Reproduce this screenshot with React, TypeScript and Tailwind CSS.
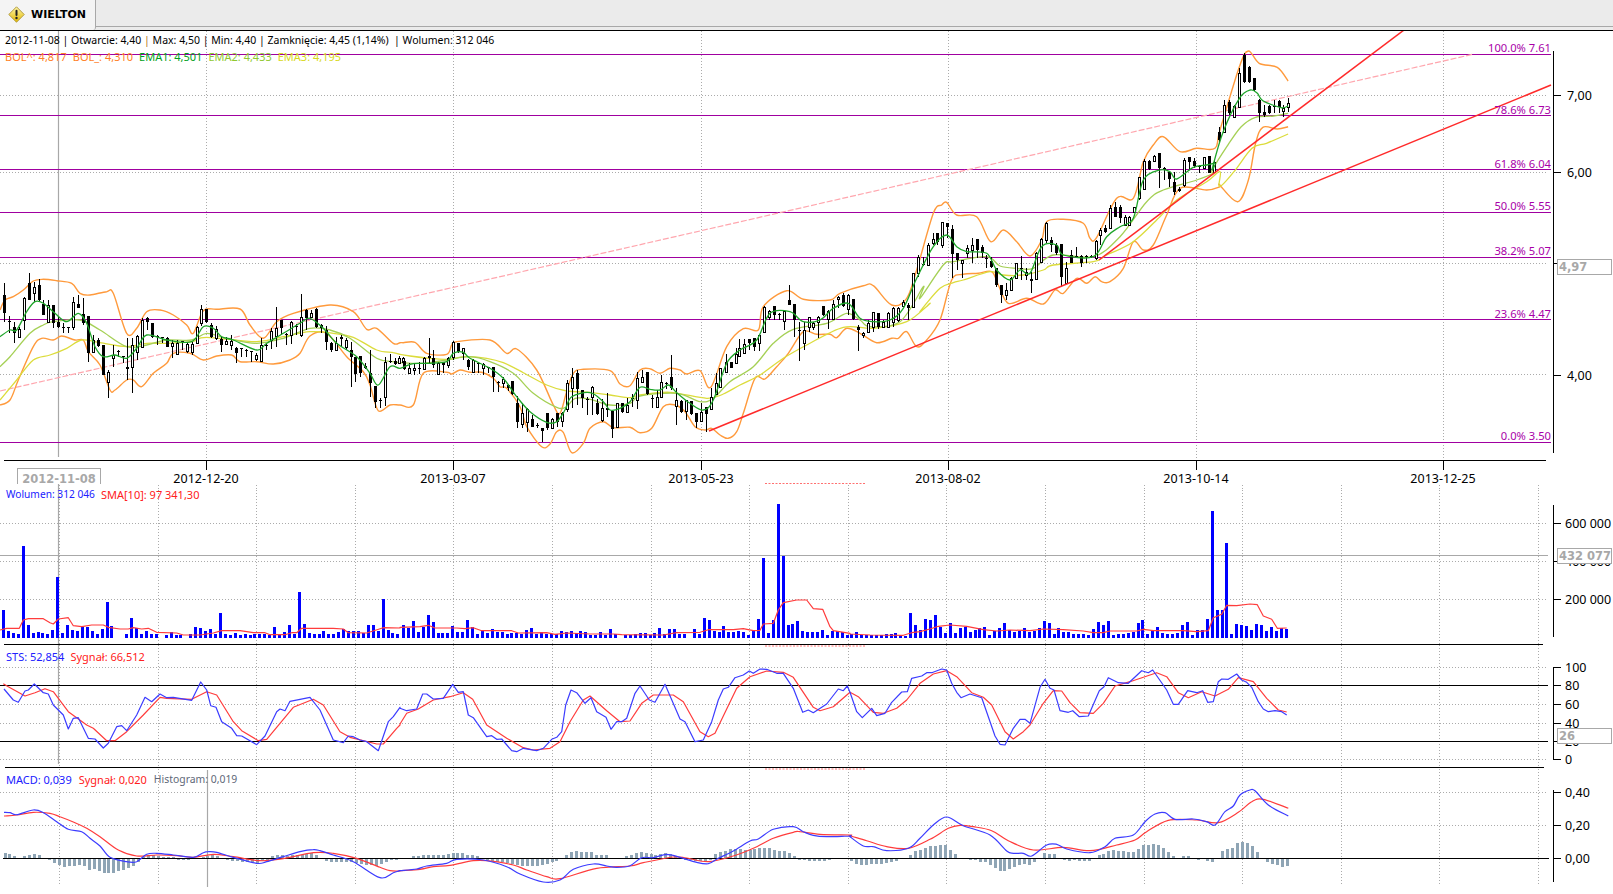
import React from "react";

type Pt = [number, number];
type Candle = [number, number, number, number, number, number];

// zoom-read points -> page coordinates
const z = (pts: number[][], x0: number, y0: number, sx = 3): Pt[] =>
  pts.map(([x, y]) => [x0 + x / sx, y0 + y / 3]);

const path = (pts: Pt[]) => pts.map(([x, y]) => `${x.toFixed(1)},${y.toFixed(1)}`).join(" ");

// smooth curve through the points (catmull-rom)
const smooth = (pts: Pt[]) => {
  let d = `M${pts[0][0].toFixed(1)} ${pts[0][1].toFixed(1)}`;
  for (let i = 0; i < pts.length - 1; i++) {
    const p0 = pts[Math.max(i - 1, 0)];
    const p1 = pts[i];
    const p2 = pts[i + 1];
    const p3 = pts[Math.min(i + 2, pts.length - 1)];
    const c1x = p1[0] + (p2[0] - p0[0]) / 6;
    const c1y = p1[1] + (p2[1] - p0[1]) / 6;
    const c2x = p2[0] - (p3[0] - p1[0]) / 6;
    const c2y = p2[1] - (p3[1] - p1[1]) / 6;
    d += `C${c1x.toFixed(1)} ${c1y.toFixed(1)} ${c2x.toFixed(1)} ${c2y.toFixed(1)} ${p2[0].toFixed(1)} ${p2[1].toFixed(1)}`;
  }
  return d;
};

const BOL_UP: Pt[] = [
  ...z([[0,180],[15,150],[40,140],[70,120],[100,93],[130,88],[170,92],[215,100],[240,130],[270,135],[320,125],[340,130],[380,250],[410,235],[440,185],[480,180],[520,195],[560,225],[580,250],[610,182],[650,178],[720,177],[750,225],[790,265],[830,215],[880,190],[990,165],[1060,185],[1100,238],[1130,235],[1180,280]], 0, 250),
  ...z([[30,68],[40,68],[75,67],[110,100],[170,103],[185,75],[200,65],[300,60],[350,100],[380,87],[440,150],[490,255],[510,280],[530,215],[550,160],[580,148],[660,152],[690,192],[720,197]], 390, 320),
  ...z([[0,300],[30,296],[60,310],[90,295],[120,300],[140,312],[180,302],[212,352],[260,230],[310,176],[355,180],[370,110],[440,62],[490,88],[570,90],[600,70],[670,47],[700,47],[755,105],[800,85],[830,0]], 640, 270),
  ...z([[0,253],[40,250],[65,225],[80,217],[110,255],[170,260],[212,335],[250,300],[290,335],[330,378],[365,330],[380,275],[430,268],[490,280],[510,325],[530,322],[590,205],[640,205],[670,95],[700,45],[730,20],[780,65],[830,55],[885,55],[900,0]], 920, 130).slice(1),
  ...z([[470,355],[525,110],[550,63],[580,100],[630,112],[660,153]], 1050, 30, 2.772).slice(1),
];

const BOL_LOW: Pt[] = [
  ...z([[0,465],[30,450],[55,390],[100,290],[125,265],[160,270],[185,258],[225,270],[250,270],[265,305],[300,345],[330,420],[345,420],[380,390],[400,390],[425,410],[460,370],[500,340],[520,310],[570,310],[610,330],[650,318],[695,315],[720,335],[770,335],[820,342],[870,330],[900,310],[930,258],[980,250],[1040,320],[1090,365],[1110,405],[1135,482],[1170,465]], 0, 250),
  ...z([[30,255],[70,255],[100,160],[170,157],[185,162],[210,150],[240,157],[275,157],[310,175],[330,200],[350,205],[390,260],[410,320],[455,380],[480,372],[500,335],[520,337],[545,398],[580,370],[600,325],[640,305],[670,323],[720,322]], 390, 320),
  ...z([[0,488],[35,475],[70,410],[105,405],[135,425],[165,470],[195,480],[215,475],[240,495],[265,505],[290,485],[310,430],[345,325],[375,327],[410,290],[445,250],[490,185],[530,193],[570,193],[590,203],[620,175],[660,190],[710,218],[755,205],[775,205],[800,185],[830,230],[860,210]], 640, 270),
  ...z([[60,570],[95,450],[130,433],[175,430],[215,425],[235,465],[265,520],[320,505],[370,522],[405,480],[430,490],[470,445],[500,460],[525,440],[545,455],[570,455],[610,415],[640,335],[670,360],[700,345],[740,255],[780,175],[860,180],[900,170]], 920, 130),
  ...z([[470,465],[520,515],[550,450],[570,340],[590,292],[630,297],[660,290]], 1050, 30, 2.772),
];

const EMA1: Pt[] = [
  ...z([[0,260],[30,240],[50,240],[80,185],[105,155],[130,160],[165,190],[200,215],[235,190],[260,220],[285,290],[310,320],[345,315],[380,325],[410,295],[440,255],[500,270],[575,275],[610,230],[640,235],[665,260],[700,270],[770,300],[800,280],[850,250],[900,220],[930,205],[970,235],[1010,280],[1070,320],[1110,370],[1135,405],[1170,350]], 0, 250),
  ...z([[30,145],[60,133],[90,130],[120,130],[170,125],[190,100],[220,97],[240,115],[300,145],[340,175],[380,230],[420,275],[470,307],[500,305],[525,270],[545,230],[600,218],[640,245],[660,270],[690,265],[720,245]], 390, 320),
  ...z([[0,352],[30,358],[60,360],[85,345],[110,368],[150,400],[190,420],[220,390],[260,280],[300,240],[350,210],[390,130],[450,125],[490,155],[540,150],[580,115],[625,100],[660,145],[700,155],[750,150],[790,115],[830,25]], 640, 270),
  ...z([[40,350],[80,315],[110,350],[140,365],[200,370],[230,420],[270,450],[300,420],[330,430],[365,350],[410,345],[430,375],[520,380],[560,320],[600,290],[640,265],[670,150],[720,120],[750,125],[770,147],[820,112],[860,105],[885,100]], 920, 130),
  ...z([[450,415],[480,305],[525,205],[555,180],[575,190],[590,212],[640,233],[660,228]], 1050, 30, 2.772),
];

const EMA2: Pt[] = [
  ...z([[0,350],[30,320],[90,250],[130,225],[160,215],[240,210],[300,240],[380,290],[440,285],[500,270],[575,270],[620,250],[680,265],[770,280],[850,265],[930,235],[990,240],[1050,265],[1130,325],[1180,335]], 0, 250),
  ...z([[30,128],[100,130],[170,120],[240,110],[300,125],[370,160],[430,220],[500,262],[530,260],[555,235],[600,238],[660,255],[720,250]], 390, 320),
  ...z([[0,378],[110,370],[180,395],[220,385],[270,335],[340,290],[400,220],[460,178],[560,160],[620,130],[660,150],[690,170],[780,155],[850,50]], 640, 270),
  ...z([[0,505],[70,405],[100,395],[200,380],[240,408],[290,415],[340,415],[400,375],[520,380],[600,320],[680,215],[730,180],[830,150],[880,130]], 920, 130),
  ...z([[450,420],[490,350],[530,290],[570,262],[620,258],[660,250]], 1050, 30, 2.772),
];

const EMA3: Pt[] = [
  ...z([[0,450],[25,420],[50,390],[100,330],[150,315],[200,295],[245,270],[300,278],[380,290],[440,280],[500,280],[575,275],[620,262],[770,275],[850,260],[930,245],[1000,250],[1060,262],[1130,300],[1180,308]], 0, 250),
  ...z([[30,103],[60,108],[120,115],[170,118],[230,110],[290,115],[340,128],[400,158],[470,195],[530,213],[600,217],[660,225],[720,233]], 390, 320),
  ...z([[0,375],[90,367],[200,385],[250,372],[300,345],[360,315],[430,265],[500,225],[610,172],[700,175],[800,155],[870,100]], 640, 270),
  ...z([[0,545],[60,475],[100,458],[130,450],[210,425],[250,435],[310,435],[370,420],[400,405],[520,395],[560,375],[640,335],[720,260],[770,210],[860,155],[900,125]], 920, 130),
  ...z([[470,470],[510,425],[560,355],[600,340],[660,312]], 1050, 30, 2.772),
];

// [zoomX, bodyTop, bodyBottom, wickTop, wickBottom, black]
const C1: Candle[] = [[13,135,190,100,215,1],[28,212,214,198,250,1],[43,230,250,215,280,1],[58,237,262,230,265,0],[73,143,210,140,240,0],[88,100,150,70,150,1],[103,112,130,95,155,0],[118,105,150,88,155,1],[130,162,195,150,195,1],[145,165,215,150,218,0],[160,165,218,165,235,1],[175,215,232,200,235,1],[190,231,233,220,248,1],[205,232,235,230,248,1],[220,155,232,140,240,0],[235,162,175,135,175,1],[250,192,220,145,225,1],[265,198,308,198,335,1],[280,270,305,255,305,0],[295,270,287,265,290,1],[310,285,375,285,375,1],[325,365,395,360,445,0],[340,315,325,285,350,0],[355,302,307,300,320,1],[370,318,320,318,340,1],[382,350,358,265,390,1],[397,285,350,265,428,0],[412,257,305,255,330,0],[427,210,290,205,295,0],[442,205,215,200,240,1],[457,220,260,220,265,1],[472,257,259,255,285,1],[487,261,263,260,280,1],[502,265,290,260,290,1],[517,280,287,270,325,0],[532,278,312,270,315,0],[547,274,276,272,300,1],[562,282,302,275,310,0],[577,282,305,275,315,0],[592,232,278,228,280,0],[604,178,218,165,228,0],[619,178,215,178,220,1],[634,225,262,218,265,1],[649,238,265,228,270,0],[664,268,285,258,305,1],[679,272,282,262,285,0],[694,272,285,255,300,0],[709,295,310,290,340,1],[724,295,297,295,322,1],[739,299,301,297,320,1],[754,303,305,302,335,1],[769,315,328,310,332,0],[784,285,332,265,335,0],[799,284,286,282,300,1],[814,242,270,235,298,0],[827,235,258,170,290,0],[842,210,235,210,255,1],[857,252,254,248,285,1],[872,215,255,212,282,0],[887,227,229,222,255,1],[902,202,255,132,262,0],[917,180,205,178,240,1],[932,188,200,180,205,0],[947,178,230,175,235,1],[962,225,235,222,250,1],[977,240,275,228,300,1],[992,278,300,275,305,1],[1007,278,300,262,302,0],[1022,260,268,255,290,1],[1037,270,290,265,300,0],[1052,300,320,275,412,1],[1065,320,372,320,395,1],[1080,318,370,318,380,1],[1095,347,355,340,358,1],[1110,370,398,300,440,1],[1125,408,455,408,475,1],[1140,451,453,445,475,1],[1155,335,442,322,468,0],[1170,334,336,312,340,1],[1185,333,342,325,345,1],[1197,325,338,318,342,0]];

const C2: Candle[] = [[38,115,125,110,130,0],[42,122,147,115,150,1],[57,143,160,130,162,0],[72,145,150,130,165,0],[87,143,148,125,162,1],[102,115,147,110,148,0],[116,107,115,55,130,1],[130,115,135,90,145,1],[145,130,162,125,165,0],[160,125,135,125,160,1],[175,115,135,110,145,0],[190,65,110,62,120,0],[205,70,95,70,100,1],[220,85,100,85,120,0],[235,120,142,118,150,1],[250,120,155,118,160,0],[265,129,131,125,158,1],[280,133,145,130,165,0],[295,141,143,140,160,1],[310,142,172,142,215,1],[325,185,187,183,215,1],[340,178,188,172,205,0],[355,195,205,193,212,1],[367,183,222,183,225,1],[382,250,305,228,325,1],[397,280,312,250,325,0],[412,268,305,265,335,0],[427,297,320,285,322,1],[442,314,316,308,325,1],[457,325,332,325,365,1],[472,280,325,280,330,1],[487,298,323,293,325,0],[502,280,305,278,322,1],[517,280,302,275,322,0],[532,188,268,180,275,0],[547,170,205,145,265,0],[562,160,208,150,255,1],[577,210,235,210,265,1],[590,237,239,230,285,1],[605,202,232,198,285,0],[620,250,282,238,285,1],[635,265,300,238,305,0],[650,265,270,218,290,1],[665,272,328,272,355,1],[680,250,322,248,325,0],[695,250,275,250,278,1],[710,255,275,235,278,0],[725,234,236,222,262,1],[740,175,240,155,268,0],[755,172,185,150,188,0],[770,155,222,155,225,1],[785,234,236,225,265,1],[800,232,260,210,265,0],[812,185,232,165,235,0],[827,189,191,185,208,1],[842,170,205,105,210,1],[857,240,258,205,315,0],[872,243,277,240,280,1],[887,240,272,240,300,0],[902,243,282,243,285,1],[917,280,305,278,325,1],[932,275,302,248,305,0],[947,262,282,260,335,1]];

const C3: Candle[] = [[212,382,418,355,420,0],[227,338,372,310,372,0],[241,295,352,295,355,0],[257,277,305,253,305,0],[272,277,295,277,295,1],[287,253,278,235,280,0],[298,235,258,207,260,0],[313,222,248,207,250,0],[328,208,218,208,240,1],[343,205,232,205,242,1],[358,195,220,195,243,0],[373,110,187,108,190,0],[388,123,140,120,150,0],[403,108,135,108,150,1],[418,131,133,128,150,1],[433,122,152,120,180,0],[448,90,104,45,104,1],[463,102,150,102,200,1],[478,181,183,155,272,1],[493,180,220,155,240,0],[508,142,172,140,185,0],[520,160,172,155,180,0],[535,140,155,138,205,0],[550,108,135,108,137,1],[565,122,148,120,178,0],[580,102,148,90,150,0],[595,80,88,78,115,0],[610,75,108,68,110,1],[625,75,118,72,135,0],[640,88,148,88,150,1],[655,170,180,165,242,1],[670,188,195,185,205,0],[685,158,185,150,190,0],[700,127,172,125,185,0],[715,130,170,130,178,1],[730,155,170,150,172,0],[745,130,172,125,175,0],[758,115,155,112,172,0],[773,115,150,112,155,0],[788,97,107,90,108,0],[803,105,115,100,150,1],[818,10,112,8,115,0],[833,-40,10,-45,20,0]];

const C4: Candle[] = [[8,402,404,380,408,1],[23,345,405,340,405,0],[38,328,340,310,345,0],[52,310,335,310,345,1],[67,275,345,275,355,0],[82,280,290,280,325,1],[97,297,372,285,445,1],[112,370,390,370,420,1],[127,390,398,390,445,0],[142,355,368,345,385,0],[155,345,360,325,400,0],[170,328,360,328,385,1],[185,352,370,345,385,1],[199,384,386,375,415,1],[214,393,412,380,415,1],[229,415,465,415,470,1],[244,465,495,465,518,1],[259,480,495,460,510,0],[274,445,480,440,482,0],[289,400,445,400,445,0],[304,414,416,378,450,1],[319,425,435,415,450,0],[334,447,452,425,488,1],[349,370,447,365,450,0],[364,327,395,325,400,0],[377,280,330,275,340,0],[392,330,345,320,365,1],[407,345,370,340,375,1],[422,343,440,343,470,1],[437,415,458,395,460,0],[452,375,400,360,400,1],[467,377,379,352,385,1],[482,378,398,375,412,1],[497,377,379,375,400,1],[512,377,379,375,385,1],[527,333,385,330,390,0],[541,300,315,295,345,0],[556,293,305,285,310,1],[571,233,293,225,298,0],[586,232,260,215,262,1],[601,230,265,225,280,1],[615,262,285,255,288,0],[628,262,285,258,288,0],[643,232,245,230,248,0],[658,142,205,140,210,0],[672,92,178,88,180,0],[687,92,118,90,120,1],[703,78,92,75,95,0],[718,68,115,68,175,1],[733,115,120,110,150,1],[748,125,148,125,170,1],[763,155,185,125,195,1],[778,178,182,172,186,1],[793,90,165,85,170,0],[808,82,95,80,120,1],[823,92,108,85,115,1],[838,109,111,105,130,1],[851,82,115,80,118,0],[866,78,128,78,130,1],[881,95,125,90,128,0]];

const C5: Candle[] = [[468,305,330,290,340,1],[482,225,305,210,310,0],[497,215,250,210,255,1],[511,228,260,225,262,0],[525,130,230,115,232,0],[538,75,155,70,158,1],[552,110,155,108,158,1],[566,145,180,143,182,1],[580,210,250,208,275,1],[594,245,255,225,260,1],[608,228,250,226,252,1],[622,229,231,210,250,1],[634,212,230,210,248,1],[647,235,242,225,260,0],[661,220,230,205,245,0]];

const toCandles = (c: Candle[], x0: number, y0: number, sx = 3) =>
  c.map(([x, bt, bb, wt, wb, k]) => ({
    x: Math.round(x0 + x / sx),
    bt: Math.round(y0 + bt / 3),
    bb: Math.round(y0 + bb / 3),
    wt: Math.round(y0 + wt / 3),
    wb: Math.round(y0 + wb / 3),
    black: k === 1,
  }));

const CANDLES = [
  ...toCandles(C1, 0, 250),
  ...toCandles(C2, 390, 320),
  ...toCandles(C3, 640, 270),
  ...toCandles(C4, 920, 130),
  ...toCandles(C5, 1050, 30, 2.772),
];

// heights in px above the baseline
const VOL1 = [28,7,5,4,92,13,5,6,5,4,8,61,5,13,8,7,11,11,7,4,9,36,12,0,0,4,20,10,4,7,4,4,0,3,6,3,3,0,4,11,10,7,9,4,25,4,3,5,3,4,3,4,4,4,3,11,3,6,13,4,46,14,5,4,4,7,4,4,6,9,7,7,7,5,13,13,7,39,8,5,4];
const VOL2 = [13,10,17,6,11,23,16,5,5,5,12,6,6,18,11,4,8,5,9,6,6,4,5,5,4,8,10,4,6,4,4,4,7,6,7,5,7,6,3,3,6,3,9,4,0,3,3,4,5,5,3,5,10,4,9,9,4,4,0,9,4,20,18,7,6,12,6,6,7,6,3,7,19,80,5,18,134,82,13,14,17,7,6,6,6,8,3,7,7,6,3];
const VOL3 = [4,6,3,3,3,3,3,4,4,5,3,2,25,13,8,19,18,23,11,5,15,5,10,11,6,8,10,11,3,7,10,15,8,6,7,10,6,7,10,17,15,4,10,6,6,4,4,4,3,9,16,13,17,3,4,4,5,6,15,18,4,7,11,5,4,4,5,13,16,3,8,8,19,127,28,28,95,4,14,13,12,8,14,13,7,11,7,10,9];

const SMA: Pt[] = [
  ...z([[0,300],[20,295],[58,295],[70,270],[85,266],[130,266],[150,278],[160,282],[175,267],[205,263],[220,287],[245,290],[275,285],[310,285],[325,292],[360,297],[385,297],[400,293],[425,297],[445,295],[470,307],[530,309],[550,315],[600,315],[640,309],[665,302],[720,302],[760,308],[795,308],[810,314],[855,314],[875,308],[890,308],[905,295],[1000,295],[1030,297],[1045,308],[1100,309],[1150,293],[1200,294]], 0, 530),
  ...z([[0,382],[60,380],[85,376],[105,384],[170,384],[195,386],[220,383],[245,392],[335,392],[355,399],[440,398],[465,403],[500,399],[570,402],[640,402],[665,404],[790,405],[830,398],[900,397],[925,389],[1000,389],[1030,386],[1060,392],[1080,391],[1090,372],[1120,370],[1135,330],[1150,308],[1190,300],[1220,300],[1240,326],[1268,328],[1290,380],[1300,392],[1350,400]], 400, 500),
  ...z([[0,402],[60,405],[160,406],[185,398],[210,395],[240,387],[265,379],[300,375],[350,379],[400,389],[440,393],[480,390],[540,392],[580,387],[640,389],[700,393],[730,398],[760,398],[780,393],[860,393],[880,388],[910,392],[1000,392],[1040,395],[1075,392],[1090,353],[1115,343],[1130,316],[1160,317],[1200,312],[1222,314],[1240,348],[1265,358],[1282,385],[1310,384]], 850, 500),
];

const STS_BLUE: Pt[] = [
  ...z([[12,207],[40,240],[55,247],[75,213],[85,210],[103,192],[130,218],[145,222],[160,255],[190,285],[205,327],[220,295],[235,293],[265,355],[285,357],[310,384],[325,370],[350,320],[365,317],[380,332],[410,285],[435,232],[455,245],[480,222],[500,233],[520,232],[575,241],[602,186],[620,210],[632,257],[648,262],[665,305],[695,325],[710,347],[725,348],[770,374],[795,348],[830,275],[840,267],[855,272],[870,244],[930,232],[960,270],[1000,360],[1030,368],[1045,348],[1060,350],[1080,360],[1100,365],[1135,392],[1165,305],[1180,290],[1200,262]], 0, 620),
  ...z([[0,625],[20,632],[50,627],[68,582],[80,582],[100,597],[130,595],[158,553],[175,577],[190,575],[205,645],[220,653],[260,710],[275,707],[290,718],[305,717],[335,752],[350,755],[370,745],[410,752],[430,745],[455,718],[470,712],[485,695],[497,615],[513,570],[530,578],[555,610],[573,593],[590,635],[618,652],[633,688],[650,665],[665,665],[680,655],[705,580],[720,558],[748,600],[765,607],[795,553],[840,657],[855,665],[885,725],[910,720],[935,665],[955,600],[970,567],[985,562],[1005,533],[1030,525],[1048,513],[1060,520],[1080,507],[1100,508],[1130,520],[1150,520],[1180,565],[1208,637],[1225,630],[1240,638],[1280,612],[1315,567],[1330,572],[1342,558],[1350,577]], 400, 500),
  ...z([[20,635],[37,653],[65,625],[80,647],[105,640],[125,607],[155,576],[172,575],[185,535],[215,528],[230,518],[245,518],[275,507],[290,510],[305,550],[320,577],[333,593],[360,582],[395,593],[435,708],[450,733],[465,735],[490,685],[510,658],[525,658],[540,670],[570,562],[585,538],[600,565],[612,570],[630,632],[655,637],[668,632],[688,650],[715,648],[748,572],[762,560],[775,533],[805,548],[835,550],[875,512],[895,518],[908,510],[950,570],[970,613],[985,613],[1013,572],[1040,578],[1058,572],[1073,607],[1090,605],[1105,545],[1115,537],[1135,538],[1160,522],[1175,540],[1190,547],[1205,562],[1225,605],[1240,627],[1255,635],[1275,632],[1295,635],[1310,645]], 850, 500),
];

const STS_RED: Pt[] = [
  ...z([[10,191],[25,200],[75,228],[105,218],[135,206],[160,215],[205,275],[260,315],[280,325],[320,362],[345,362],[380,335],[430,285],[480,232],[500,235],[575,238],[620,215],[650,225],[700,305],[725,332],[775,362],[800,358],[840,310],[880,262],[940,238],[970,255],[1020,335],[1050,352],[1130,372],[1150,372],[1190,325],[1200,315]], 0, 620),
  ...z([[0,672],[20,640],[55,627],[100,600],[150,590],[190,578],[218,598],[260,675],[320,715],[370,743],[400,750],[450,745],[480,725],[510,665],[550,600],[570,588],[620,632],[660,665],[690,663],[725,610],[760,585],[820,585],[850,605],[900,695],[925,710],[945,700],[1010,565],[1050,530],[1100,513],[1150,517],[1180,532],[1240,622],[1260,632],[1300,620],[1350,577]], 400, 500),
  ...z([[25,590],[70,637],[100,640],[140,625],[170,600],[210,550],[250,522],[290,512],[320,530],[365,578],[400,592],[425,615],[465,695],[490,717],[520,695],[540,675],[580,610],[610,572],[635,573],[660,608],[690,638],[730,640],[760,610],[795,558],[840,545],[920,518],[950,530],[985,578],[1015,593],[1055,575],[1095,588],[1135,568],[1165,533],[1210,545],[1250,595],[1285,630],[1310,636]], 850, 500),
];

const MACD_BLUE: Pt[] = [
  ...z([[12,577],[30,578],[50,584],[100,570],[130,578],[170,605],[205,628],[245,635],[270,655],[300,678],[330,712],[380,725],[410,725],[440,703],[470,700],[520,705],[580,712],[610,698],[625,695],[650,697],[700,712],[770,730],[800,725],[850,710],[900,695],[940,689],[960,692],[1000,705],[1060,725],[1140,773],[1180,758],[1200,752]], 0, 620),
  ...z([[0,1112],[50,1107],[80,1098],[140,1090],[170,1078],[250,1080],[320,1100],[360,1122],[430,1146],[480,1140],[520,1108],[580,1092],[620,1098],[650,1102],[690,1097],[725,1073],[760,1073],[800,1063],[840,1072],[890,1087],[925,1091],[955,1075],[1000,1053],[1050,1023],[1075,1017],[1120,988],[1180,980],[1210,995],[1240,1006],[1280,1010],[1350,1008]], 400, 500),
  ...z([[0,1010],[40,1038],[70,1040],[110,1052],[175,1045],[210,1015],[250,975],[290,951],[340,977],[420,1005],[470,1053],[490,1060],[520,1060],[545,1068],[590,1035],[620,1033],[650,1047],[720,1058],[765,1040],[795,1015],[850,1005],[885,965],[915,942],[945,938],[975,958],[1030,957],[1070,965],[1095,975],[1125,935],[1150,918],[1170,885],[1200,870],[1215,872],[1255,915],[1315,948]], 850, 500),
];

const MACD_RED: Pt[] = [
  ...z([[12,588],[50,585],[100,577],[150,580],[180,590],[220,606],[260,625],[300,650],[355,690],[410,708],[470,705],[530,707],[580,712],[640,703],[700,710],[780,722],[850,716],[940,698],[1000,700],[1070,715],[1140,742],[1170,752],[1200,753]], 0, 620),
  ...z([[0,1112],[60,1108],[100,1100],[150,1096],[220,1082],[260,1082],[340,1095],[380,1110],[440,1130],[480,1136],[590,1105],[690,1098],[730,1088],[820,1071],[860,1074],[925,1085],[1000,1068],[1060,1045],[1120,1015],[1180,997],[1200,995],[1260,1003],[1350,1005]], 400, 500),
  ...z([[0,1007],[50,1022],[110,1040],[175,1045],[240,1018],[295,985],[330,976],[370,980],[425,992],[475,1022],[550,1050],[640,1042],[720,1052],[800,1035],[855,1020],[890,995],[955,961],[1040,960],[1105,968],[1165,937],[1205,905],[1240,898],[1315,925]], 850, 500),
];

const HIST1 = [5,4,2,0,2,3,4,3,0,-1,-4,-6,-8,-7,-7,-6,-7,-11,-10,-12,-14,-14,-14,-12,-11,-9,-7,-3,1,3,3,2,1,1,1,-1,-1,-1,0,0,1,2,3,2,0,-1,-2,-2,-3,-3,-3,-4,-2,-1,2,3,3,2,3,3,3,4,5,3,0,-2,-3,-3,-3,-3,-3,-4,-5,-6,-6,-7,-5,-3,-1,-1];
const HIST2 = [0,0,2,2,3,3,3,3,3,4,5,5,5,3,3,2,0,-1,-2,-3,-3,-4,-5,-6,-7,-7,-7,-7,-6,-5,-3,-2,0,3,6,7,6,6,6,3,3,3,0,0,0,2,3,5,6,5,4,3,4,5,4,2,1,-1,-1,-2,-2,-3,-1,4,6,7,9,9,9,8,8,9,10,10,10,8,7,7,5,2,-1,-1,-2,-2,-2,-2,-1,0,0];
const HIST3 = [-2,-5,-6,-6,-5,-5,-5,-4,-3,-2,0,0,3,7,8,10,12,12,13,13,8,4,0,0,-1,-1,-3,-3,-6,-9,-12,-12,-10,-8,-6,-5,-6,-3,0,5,4,4,0,-1,-2,-1,-2,-2,-2,0,3,4,7,8,7,7,6,6,9,13,13,14,13,10,6,2,0,2,2,0,-1,0,-2,-3,0,7,9,10,15,16,15,12,6,0,-3,-5,-6,-8,-7];

const LEVELS = [
  { y: 54, label: "100.0% 7.61", ty: 48 },
  { y: 115, label: "78.6% 6.73", ty: 110 },
  { y: 169, label: "61.8% 6.04", ty: 164 },
  { y: 212, label: "50.0% 5.55", ty: 206 },
  { y: 257, label: "38.2% 5.07", ty: 251 },
  { y: 319, label: "23.6% 4.47", ty: 314 },
  { y: 442, label: "0.0% 3.50", ty: 436 },
];

const DATES: [number, string][] = [
  [206, "2012-12-20"],
  [453, "2013-03-07"],
  [701, "2013-05-23"],
  [948, "2013-08-02"],
  [1196, "2013-10-14"],
  [1443, "2013-12-25"],
];

const LOWER_GRID = Array.from({ length: 16 }, (_, i) => Math.round(59 + i * 98.6));
const AXIS_X = 1553;

function Panel({ top, height, className, children }: { top: number; height: number; className: string; children: React.ReactNode }) {
  return (
    <div className={`relative w-[1613px] shrink-0 ${className}`}>
      <svg width={1613} height={height} viewBox={`0 ${top} 1613 ${height}`} className="block">
        {children}
      </svg>
    </div>
  );
}

function HLine({ y, x1 = 0, x2 = 1548, color = "#000" }: { y: number; x1?: number; x2?: number; color?: string }) {
  return <line x1={x1} x2={x2} y1={y + 0.5} y2={y + 0.5} stroke={color} shapeRendering="crispEdges" />;
}

function GridH({ y }: { y: number }) {
  return <line x1={0} x2={1548} y1={y + 0.5} y2={y + 0.5} stroke="#ababab" strokeDasharray="1 2" shapeRendering="crispEdges" />;
}

function GridV({ x, y1, y2 }: { x: number; y1: number; y2: number }) {
  return <line x1={x + 0.5} x2={x + 0.5} y1={y1} y2={y2} stroke="#ababab" strokeDasharray="1 2" shapeRendering="crispEdges" />;
}

function Curve({ pts, color, w = 1.3 }: { pts: Pt[]; color: string; w?: number }) {
  return <path d={smooth(pts)} fill="none" stroke={color} strokeWidth={w} strokeLinejoin="round" />;
}

function Jagged({ pts, color, w = 1.2 }: { pts: Pt[]; color: string; w?: number }) {
  return <polyline points={path(pts)} fill="none" stroke={color} strokeWidth={w} strokeLinejoin="round" />;
}

function Tick({ y, label, x = 1567 }: { y: number; label: string; x?: number }) {
  return (
    <g>
      <line x1={AXIS_X} x2={AXIS_X + 8} y1={y + 0.5} y2={y + 0.5} stroke="#000" shapeRendering="crispEdges" />
      <text x={x} y={y + 4.5} fontSize={12.5} fill="#000">{label}</text>
    </g>
  );
}

function ValueBox({ y, h, label }: { y: number; h: number; label: string }) {
  return (
    <g>
      <rect x={1557.5} y={y + 0.5} width={54} height={h} fill="#fff" stroke="#a8a8a8" shapeRendering="crispEdges" />
      <text x={1559} y={y + h / 2 + 4.5} fontSize={11.5} fontWeight={700} fill="#a8a8a8" className="font-['DejaVu_Sans']">{label}</text>
    </g>
  );
}

function RedDots({ y }: { y: number }) {
  return <line x1={765} x2={865} y1={y} y2={y} stroke="#ff7070" strokeDasharray="2 1.5" />;
}

function MainPanel() {
  return (
    <Panel top={31} height={459} className="h-[459px]">
      {DATES.map(([x]) => <GridV key={x} x={x} y1={31} y2={460} />)}
      {LOWER_GRID.map((x) => <GridV key={x} x={x} y1={485} y2={490} />)}
      <GridH y={95} />
      <GridH y={172} />
      <GridH y={263} />
      <GridH y={374} />
      <line x1={58.5} x2={58.5} y1={31} y2={457} stroke="#a8a8a8" strokeWidth={1.2} />
      <line x1={58.5} x2={58.5} y1={484} y2={490} stroke="#a8a8a8" strokeWidth={1.2} />
      {LEVELS.map((l) => <HLine key={l.y} y={l.y} x2={1551} color="#a000a0" />)}
      <line x1={0} y1={391} x2={1474} y2={54} stroke="#ffa6ae" strokeWidth={1.2} strokeDasharray="6 2" />
      <Curve pts={BOL_UP} color="#ff9a3c" w={1.4} />
      <Curve pts={BOL_LOW} color="#ff9a3c" w={1.4} />
      <Curve pts={EMA3} color="#dcdc3c" />
      <Curve pts={EMA2} color="#a5d055" />
      {CANDLES.map((c, i) => (
        <g key={i} shapeRendering="crispEdges">
          <line x1={c.x + 0.5} x2={c.x + 0.5} y1={c.wt} y2={c.wb} stroke="#000" />
          {c.black ? (
            <rect x={c.x - 1} y={c.bt} width={3} height={Math.max(c.bb - c.bt, 1)} fill="#000" />
          ) : (
            <rect x={c.x - 0.5} y={c.bt + 0.5} width={2} height={Math.max(c.bb - c.bt, 1)} fill="#fff" stroke="#000" />
          )}
        </g>
      ))}
      <Curve pts={EMA1} color="#1fa52a" />
      <line x1={709} y1={431} x2={1551} y2={85} stroke="#ff2a2a" strokeWidth={1.5} />
      <line x1={1099} y1={260} x2={1404} y2={30} stroke="#ff2a2a" strokeWidth={1.5} />
      {LEVELS.map((l) => (
        <text key={l.label} x={1551} y={l.ty + 4} textAnchor="end" fontSize={11.2} fill="#a800a8">{l.label}</text>
      ))}
      <line x1={AXIS_X + 0.5} x2={AXIS_X + 0.5} y1={51} y2={453} stroke="#000" shapeRendering="crispEdges" />
      <Tick y={95} label="7,00" />
      <Tick y={172} label="6,00" />
      <Tick y={263} label="" />
      <Tick y={375} label="4,00" />
      <ValueBox y={259} h={15} label="4,97" />
      <HLine y={460} x1={4} x2={1546} />
      {DATES.map(([x, d]) => (
        <g key={d}>
          <line x1={x + 0.5} x2={x + 0.5} y1={460} y2={470} stroke="#000" shapeRendering="crispEdges" />
          <text x={x} y={483} textAnchor="middle" fontSize={12.5} fill="#000">{d}</text>
        </g>
      ))}
      <path d="M17.5 484V468.5H100.5V484" fill="#fff" stroke="#a8a8a8" shapeRendering="crispEdges" />
      <text x={59} y={483} textAnchor="middle" fontSize={11.5} fontWeight={700} fill="#a8a8a8" className="font-['DejaVu_Sans']">2012-11-08</text>
      <RedDots y={483.5} />
    </Panel>
  );
}

function VolumePanel() {
  return (
    <Panel top={490} height={155} className="h-[155px]">
      {LOWER_GRID.map((x) => <GridV key={x} x={x} y1={490} y2={644} />)}
      <GridH y={523} />
      <GridH y={561} />
      <GridH y={599} />
      <HLine y={555} color="#a8a8a8" />
      <line x1={58.5} x2={58.5} y1={490} y2={645} stroke="#a8a8a8" strokeWidth={1.2} />
      {VOL1.map((h, i) => h > 0 && <rect key={i} x={Math.round(2 + i * 4.93)} y={638 - h} width={3} height={h} fill="#0000ff" shapeRendering="crispEdges" />)}
      {VOL2.map((h, i) => h > 0 && <rect key={i} x={Math.round(402 + i * 4.93)} y={638 - h} width={3} height={h} fill="#0000ff" shapeRendering="crispEdges" />)}
      {VOL3.map((h, i) => h > 0 && <rect key={i} x={Math.round(850 + i * 4.94)} y={638 - h} width={3} height={h} fill="#0000ff" shapeRendering="crispEdges" />)}
      <Jagged pts={SMA} color="#ff3c3c" />
      <HLine y={644} x1={4} x2={1543} />
      <line x1={AXIS_X + 0.5} x2={AXIS_X + 0.5} y1={505} y2={637} stroke="#000" shapeRendering="crispEdges" />
      <Tick y={523} label="600 000" x={1565} />
      <Tick y={561} label="400 000" x={1565} />
      <Tick y={599} label="200 000" x={1565} />
      <ValueBox y={548} h={15} label="432 077" />
    </Panel>
  );
}

function StsPanel() {
  return (
    <Panel top={645} height={123} className="h-[123px]">
      {LOWER_GRID.map((x) => <GridV key={x} x={x} y1={645} y2={767} />)}
      <GridH y={667} />
      <GridH y={704} />
      <GridH y={723} />
      <GridH y={759} />
      <line x1={58.5} x2={58.5} y1={645} y2={764} stroke="#a8a8a8" strokeWidth={1.2} />
      <HLine y={685} />
      <HLine y={741} />
      <Jagged pts={STS_RED} color="#ff3c3c" />
      <Jagged pts={STS_BLUE} color="#3c3cff" />
      <HLine y={767} x1={5} x2={1544} />
      <RedDots y={646} />
      <line x1={AXIS_X + 0.5} x2={AXIS_X + 0.5} y1={667} y2={760} stroke="#000" shapeRendering="crispEdges" />
      <Tick y={667} label="100" x={1565} />
      <Tick y={685} label="80" x={1565} />
      <Tick y={704} label="60" x={1565} />
      <Tick y={723} label="40" x={1565} />
      <Tick y={741} label="20" x={1565} />
      <Tick y={759} label="0" x={1565} />
      <ValueBox y={728} h={15} label="26" />
    </Panel>
  );
}

function MacdPanel() {
  return (
    <Panel top={768} height={126} className="h-[126px]">
      {LOWER_GRID.map((x) => <GridV key={x} x={x} y1={769} y2={884} />)}
      <GridH y={792} />
      <GridH y={825} />
      <line x1={207.5} x2={207.5} y1={770} y2={887} stroke="#a8a8a8" strokeWidth={1.2} />
      {HIST1.map((h, i) => h !== 0 && <rect key={i} x={Math.round(3.5 + i * 4.95)} y={h > 0 ? 858 - h : 859} width={3} height={Math.abs(h)} fill="#8fa5b5" shapeRendering="crispEdges" />)}
      {HIST2.map((h, i) => h !== 0 && <rect key={i} x={Math.round(402 + i * 4.95)} y={h > 0 ? 858 - h : 859} width={3} height={Math.abs(h)} fill="#8fa5b5" shapeRendering="crispEdges" />)}
      {HIST3.map((h, i) => h !== 0 && <rect key={i} x={Math.round(850 + i * 4.95)} y={h > 0 ? 858 - h : 859} width={3} height={Math.abs(h)} fill="#8fa5b5" shapeRendering="crispEdges" />)}
      <HLine y={858} x1={3} x2={1549} />
      <Curve pts={MACD_RED} color="#ff3c3c" w={1.2} />
      <Curve pts={MACD_BLUE} color="#3c3cff" w={1.2} />
      <RedDots y={769} />
      <line x1={AXIS_X + 0.5} x2={AXIS_X + 0.5} y1={790} y2={882} stroke="#000" shapeRendering="crispEdges" />
      <Tick y={792} label="0,40" x={1565} />
      <Tick y={825} label="0,20" x={1565} />
      <Tick y={858} label="0,00" x={1565} />
    </Panel>
  );
}

export default function App() {
  return (
    <div className="relative flex h-[894px] w-[1613px] flex-col overflow-hidden bg-white font-['Noto_Sans',sans-serif] text-[11px] leading-[13px] text-black">
      {/* Tab bar */}
      <header className="relative h-[31px] shrink-0 border-b border-black bg-[#ebebeb]">
        <div className="absolute left-0 top-[26px] h-px w-full bg-[#a8a8a8]" />
        <div className="relative flex h-[30px] w-[96px] items-center gap-[6px] rounded-br-[3px] border-r border-[#a8a8a8] bg-[#f4f4f4] pb-[2px] pl-[8px]">
          <svg width="17" height="17" viewBox="0 0 17 17">
            <defs>
              <linearGradient id="warn" x1="0" y1="0" x2="0" y2="1">
                <stop offset="0" stopColor="#fff6a8" />
                <stop offset="1" stopColor="#e2b900" />
              </linearGradient>
            </defs>
            <path d="M8.5.8 16.2 8.5 8.5 16.2.8 8.5Z" fill="url(#warn)" stroke="#b09a40" strokeLinejoin="round" />
            <rect x="7.5" y="3.8" width="2" height="6.2" rx="1" fill="#222" />
            <circle cx="8.5" cy="12" r="1.2" fill="#222" />
          </svg>
          <span className="font-['DejaVu_Sans'] font-bold">WIELTON</span>
        </div>
      </header>

      <MainPanel />
      <VolumePanel />
      <StsPanel />
      <MacdPanel />

      {/* Legends lie over the charts */}
      <div className="absolute left-[5px] top-[34px] flex whitespace-pre text-[10.5px]">
        <span>2012-11-08 | Otwarcie: 4,40 <span className="text-[#b06a20]">|</span> Max: 4,50 | Min: 4,40 | Zamknięcie: 4,45 (1,14%)  | Wolumen: 312 046</span>
      </div>
      <div className="absolute left-[5px] top-[50px] flex gap-[6px]">
        <span className="text-[#ff7f27]">BOL^: 4,817</span>
        <span className="text-[#ff7f27]">BOL_: 4,310</span>
        <span className="text-[#00a020]">EMA1: 4,501</span>
        <span className="text-[#90c830]">EMA2: 4,433</span>
        <span className="text-[#d8d820]">EMA3: 4,195</span>
      </div>
      <div className="absolute left-[6px] top-[488px] flex gap-[6px]">
        <span className="text-[10.2px] text-[#2020ff]">Wolumen: 312 046</span>
        <span className="text-[#ff2020]">SMA[10]: 97 341,30</span>
      </div>
      <div className="absolute left-[6px] top-[650px] flex gap-[6px]">
        <span className="text-[#2020ff]">STS: 52,854</span>
        <span className="text-[#ff2020]">Sygnał: 66,512</span>
      </div>
      <div className="absolute left-[6px] top-[773px] flex gap-[7px]">
        <span className="text-[#2020ff]">MACD: 0,039</span>
        <span className="text-[#ff2020]">Sygnał: 0,020</span>
        <span className="text-[10.4px] text-[#606878]">Histogram: 0,019</span>
      </div>
    </div>
  );
}
